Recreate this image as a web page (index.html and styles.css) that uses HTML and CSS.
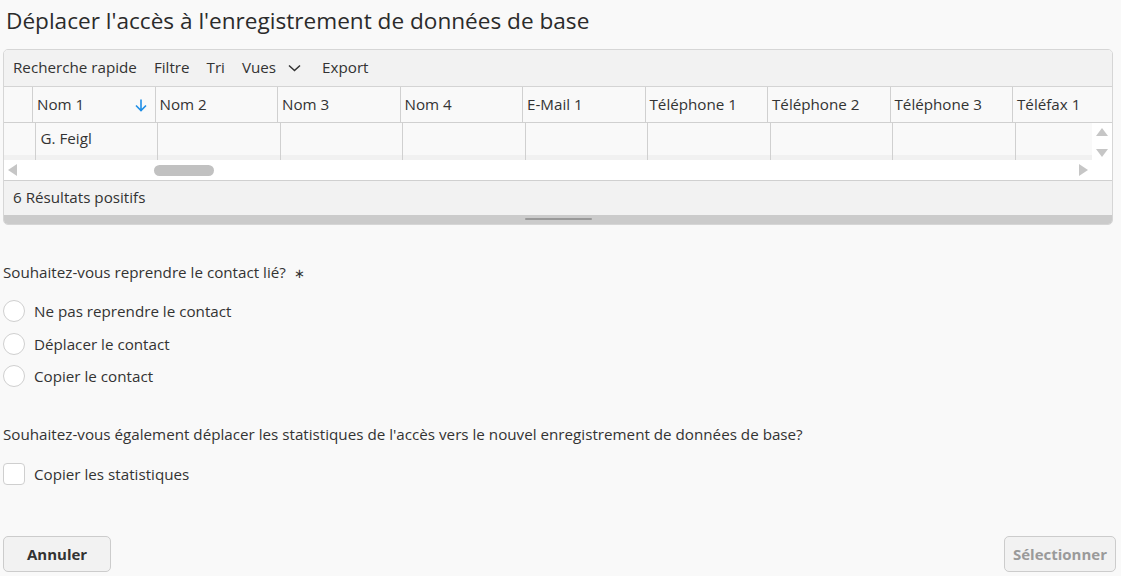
FILE: index.html
```html
<!DOCTYPE html>
<html lang="fr">

<head>
    <meta charset="UTF-8">
    <title>Déplacer l'accès</title>
    <link rel="stylesheet" href="styles.css">
</head>

<body>
    <div class="page">
        <h1 class="title">Déplacer l'accès à l'enregistrement de données de base</h1>

        <div class="grid-panel">
            <div class="toolbar">
                <span>Recherche rapide</span>
                <span>Filtre</span>
                <span>Tri</span>
                <span class="views">Vues
                    <svg width="13" height="8" viewBox="0 0 13 8"><path d="M1 1.5l5.5 5 5.5-5" fill="none" stroke="#333" stroke-width="1.5"/></svg>
                </span>
                <span>Export</span>
            </div>

            <div class="head-row">
                <div class="cell first"></div>
                <div class="cell sorted">Nom 1
                    <svg class="sort" width="12" height="13" viewBox="0 0 12 13"><path d="M6 0.5v11M1 6.5l5 5 5-5" fill="none" stroke="#1e8ee6" stroke-width="1.6"/></svg>
                </div>
                <div class="cell">Nom 2</div>
                <div class="cell">Nom 3</div>
                <div class="cell">Nom 4</div>
                <div class="cell">E-Mail 1</div>
                <div class="cell">Téléphone 1</div>
                <div class="cell">Téléphone 2</div>
                <div class="cell">Téléphone 3</div>
                <div class="cell">Téléfax 1</div>
            </div>

            <div class="body-area">
                <div class="rows">
                    <div class="row">
                        <div class="cell first"></div>
                        <div class="cell">G. Feigl</div>
                        <div class="cell"></div>
                        <div class="cell"></div>
                        <div class="cell"></div>
                        <div class="cell"></div>
                        <div class="cell"></div>
                        <div class="cell"></div>
                        <div class="cell"></div>
                        <div class="cell"></div>
                    </div>
                    <div class="row cut">
                        <div class="cell first"></div>
                        <div class="cell"></div>
                        <div class="cell"></div>
                        <div class="cell"></div>
                        <div class="cell"></div>
                        <div class="cell"></div>
                        <div class="cell"></div>
                        <div class="cell"></div>
                        <div class="cell"></div>
                        <div class="cell"></div>
                    </div>
                    <div class="hscroll">
                        <span class="arrow left"></span>
                        <span class="thumb"></span>
                        <span class="arrow right"></span>
                    </div>
                </div>
                <div class="vscroll">
                    <span class="arrow up"></span>
                    <span class="arrow down"></span>
                </div>
            </div>

            <div class="status">6 Résultats positifs</div>
            <div class="resize"><span class="grip"></span></div>
        </div>

        <div class="question">Souhaitez-vous reprendre le contact lié? <span class="req">∗</span></div>
        <div class="options">
            <label class="option"><span class="radio"></span>Ne pas reprendre le contact</label>
            <label class="option"><span class="radio"></span>Déplacer le contact</label>
            <label class="option"><span class="radio"></span>Copier le contact</label>
        </div>

        <div class="question second">Souhaitez-vous également déplacer les statistiques de l'accès vers le nouvel enregistrement de données de base?</div>
        <label class="option check-option"><span class="checkbox"></span>Copier les statistiques</label>

        <div class="actions">
            <button class="btn">Annuler</button>
            <button class="btn" disabled>Sélectionner</button>
        </div>
    </div>
</body>

</html>
```

FILE: styles.css
```css
body {
    margin: 0;
    background-color: #f9f9f9;
    font-family: "Open Sans", "Noto Sans", sans-serif;
    font-size: 15.2px;
    color: #333;
}

.page {
    height: 576px;
    box-sizing: border-box;
    padding: 0 6px 4px 3px;
    display: flex;
    flex-direction: column;
}

.title {
    font-size: 22.6px;
    font-weight: 400;
    line-height: 28px;
    margin: 0;
    padding: 7px 0 0 3px;
    color: #2b2b2b;
}

.grid-panel {
    margin-top: 14px;
    border: 1px solid #d6d6d6;
    border-radius: 5px;
    overflow: hidden;
    width: 1110px;
    box-sizing: border-box;
}

.toolbar {
    height: 37px;
    box-sizing: border-box;
    padding-bottom: 3px;
    background-color: #f2f2f2;
    border-bottom: 1px solid #d4d4d4;
    display: flex;
    align-items: center;
    gap: 17px;
    padding-left: 9px;
}

.views {
    display: flex;
    align-items: center;
    gap: 12px;
    margin-right: 4px;
}

.views svg {
    margin-top: 2px;
}

.head-row,
.row {
    display: flex;
    background-color: #f9f9f9;
}

.head-row {
    height: 35px;
    border-bottom: 1px solid #d0d0d0;
}

.cell {
    width: 122.5px;
    flex-shrink: 0;
    box-sizing: border-box;
    border-left: 1px solid #d0d0d0;
    padding-left: 4px;
    padding-bottom: 1px;
    display: flex;
    align-items: center;
    white-space: nowrap;
    overflow: hidden;
}

.head-row .cell.first {
    width: 28px;
    border-left: none;
}

.row .cell.first {
    width: 30.5px;
    border-left: none;
}

.sorted {
    justify-content: space-between;
    padding-right: 8px;
}

.sorted svg {
    margin-top: 2px;
}

.body-area {
    display: flex;
    background-color: #fff;
}

.rows {
    width: 1088px;
    overflow: hidden;
}

.row {
    height: 32px;
}

.row .cell {
    padding-left: 5px;
    padding-bottom: 2px;
}

.row.cut {
    height: 5px;
    background-color: #f1f1f1;
}

.row.cut .cell {
    padding: 0;
}

.hscroll {
    height: 20px;
    background-color: #fff;
    display: flex;
    align-items: center;
    position: relative;
}

.thumb {
    position: absolute;
    left: 150px;
    top: 5px;
    width: 60px;
    height: 11px;
    border-radius: 6px;
    background-color: #c1c1c1;
}

.arrow {
    width: 0;
    height: 0;
    border: 6px solid transparent;
}

.arrow.left {
    border-right: 9px solid #c6c6c6;
    border-left: none;
    margin-left: 4px;
}

.arrow.right {
    border-left: 9px solid #c6c6c6;
    border-right: none;
    margin-left: auto;
    margin-right: 4px;
}

.vscroll {
    flex: 1;
    display: flex;
    flex-direction: column;
    align-items: center;
    padding-top: 5px;
    gap: 13px;
}

.arrow.up {
    border-bottom: 8px solid #c6c6c6;
    border-top: none;
    border-width: 0 6px 8px;
}

.arrow.down {
    border-top: 8px solid #c6c6c6;
    border-bottom: none;
    border-width: 8px 6px 0;
}

.status {
    height: 35px;
    box-sizing: border-box;
    padding-bottom: 2px;
    border-top: 1px solid #d0d0d0;
    background-color: #f2f2f2;
    display: flex;
    align-items: center;
    padding-left: 9px;
}

.resize {
    height: 9px;
    background-color: #cbcbcb;
    display: flex;
    justify-content: center;
}

.grip {
    width: 67px;
    height: 2px;
    margin-top: 3px;
    background-color: #999;
    border-radius: 1px;
}

.question {
    margin-top: 37px;
    line-height: 20px;
}

.req {
    margin-left: 4px;
    font-size: 13px;
}

.question.second {
    margin-top: 37px;
}

.options {
    margin-top: 17px;
    display: flex;
    flex-direction: column;
    gap: 10.5px;
}

.option {
    display: flex;
    align-items: center;
    gap: 9px;
    height: 22px;
}

.radio,
.checkbox {
    width: 22px;
    height: 22px;
    box-sizing: border-box;
    border: 1px solid #cfcfcf;
    background-color: #fff;
    border-radius: 50%;
}

.checkbox {
    border-radius: 4px;
}

.check-option {
    margin-top: 19px;
}

.actions {
    margin-top: auto;
    display: flex;
    justify-content: space-between;
    margin-right: -1px;
}

.btn {
    height: 36px;
    padding: 0 23px;
    border: 1px solid #cccccc;
    border-radius: 5px;
    background-color: #f2f2f2;
    font-family: inherit;
    font-size: 15px;
    font-weight: 700;
    color: #333;
}

.btn:disabled {
    color: #9a9a9a;
    padding: 0 8px;
}
```
